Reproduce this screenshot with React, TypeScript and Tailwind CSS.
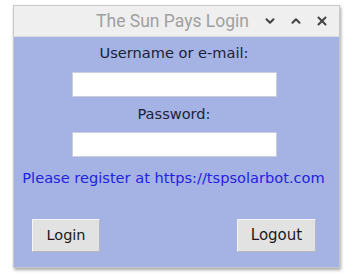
import { ChevronDown, ChevronUp, X } from 'lucide-react';

export default function App() {
  return (
    <div className="w-[361px] h-[280px] bg-white pt-[5px] pl-[13px]">
      <div className="w-[327px] h-[263px] flex flex-col border border-[#c8c8c8] shadow-[1px_2px_3px_rgba(0,0,0,0.35)]">
        <div className="h-[31px] shrink-0 bg-[#efefef] flex items-center justify-end pr-[10px] border-b border-[#dcdcdc]">
          <span className="font-['Roboto',sans-serif] text-[17.5px] text-[#a0a0a0] mr-[14px]">The Sun Pays Login</span>
          <ChevronDown className="w-[14px] h-[14px] text-[#444]" strokeWidth={3.5} />
          <ChevronUp className="w-[14px] h-[14px] text-[#444] ml-[12px]" strokeWidth={3.5} />
          <X className="w-[14px] h-[14px] text-[#444] ml-[12px]" strokeWidth={3.5} />
        </div>
        <div className="flex-1 bg-[#a4b3e3] flex flex-col items-center font-['DejaVu_Sans',sans-serif] pt-[7px] pr-[5px]">
          <div className="text-[14.6px] leading-[18px] text-[#1c2238]">Username or e-mail:</div>
          <input className="mt-[10px] w-[205px] h-[25px] bg-white border border-[#c9cde0] outline-none" />
          <div className="mt-[8px] text-[14.6px] leading-[18px] text-[#1c2238]">Password:</div>
          <input type="password" className="mt-[9px] w-[205px] h-[25px] bg-white border border-[#c9cde0] outline-none" />
          <div className="mt-[12px] text-[14.6px] leading-[18px] text-[#1f22e0] -ml-[1px] whitespace-nowrap">Please register at https://tspsolarbot.com</div>
          <div className="mt-[32px] w-full flex justify-between pl-[18px] pr-[18px]">
            <button className="w-[68px] h-[33px] bg-[#e2e2e2] border border-[#f4f4f4] border-r-[#b8b8b8] border-b-[#b8b8b8] text-[14.5px] text-[#1a1a1a]">Login</button>
            <button className="w-[79px] h-[33px] bg-[#e2e2e2] border border-[#f4f4f4] border-r-[#b8b8b8] border-b-[#b8b8b8] text-[15px] text-[#1a1a1a]">Logout</button>
          </div>
        </div>
      </div>
    </div>
  );
}
